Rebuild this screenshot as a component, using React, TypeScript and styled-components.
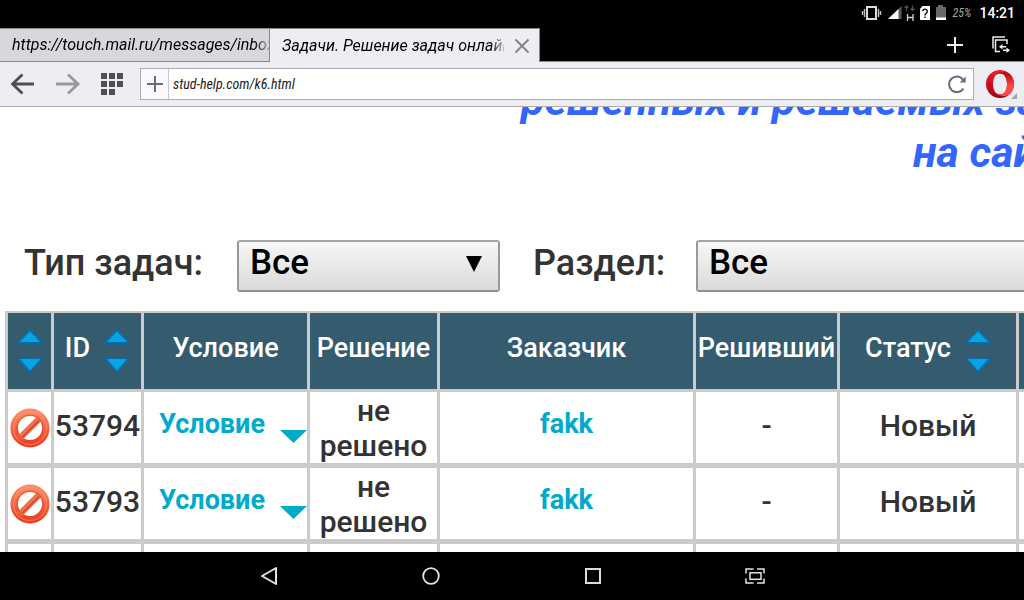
import React from "react";
import styled, { createGlobalStyle } from "styled-components";

const chrome = "#ededf4";
const chromeLine = "#adadb1";
const tabLine = "#87888c";
const gridLine = "#cbcbcb";
const headFill = "#355b6f";
const accent = "#00aaca";

const GlobalStyle = createGlobalStyle`
  *, *::before, *::after { box-sizing: border-box; }
  body { margin: 0; background: #000; font-family: Roboto, "Liberation Sans", sans-serif; }
  button { margin: 0; padding: 0; border: 0; background: none; color: inherit; font: inherit; cursor: pointer; }
  svg { display: block; flex: none; }
`;

const Screen = styled.div`
  display: flex;
  flex-direction: column;
  height: 100vh;
  overflow: hidden;
`;

const StatusBar = styled.header`
  display: flex;
  flex: none;
  justify-content: flex-end;
  align-items: center;
  height: 28px;
  padding: 0 9px 3px 0;
  background: #000;
  color: #fff;
`;

const StatusIcons = styled.div`
  display: flex;
  align-items: center;
`;

const BatteryText = styled.span`
  margin-left: 6px;
  color: #a8a8a8;
  font: italic 400 12px/16px "Roboto Condensed", Roboto, sans-serif;
`;

const Clock = styled.time`
  margin-left: 8px;
  font-size: 14px;
  font-weight: 500;
  line-height: 16px;
`;

const TabStrip = styled.nav`
  display: flex;
  flex: none;
  height: 34px;
  background: #000;
`;

const Tab = styled.div<{ $active?: boolean }>`
  display: flex;
  align-items: center;
  flex: 0 1 270px;
  min-width: 0;
  gap: 10px;
  padding: 0 ${(p) => (p.$active ? 9 : 0)}px 0 12px;
  border: solid ${tabLine};
  border-width: 1px 1px ${(p) => (p.$active ? 0 : 1)}px 0;
  background: ${(p) => (p.$active ? chrome : "#d7d8dd")};
`;

const TabTitle = styled.button`
  flex: 1;
  min-width: 0;
  overflow: hidden;
  color: #000;
  font-size: 16px;
  font-style: italic;
  line-height: 24px;
  text-align: left;
  white-space: nowrap;
  mask-image: linear-gradient(to right, #000 calc(100% - 14px), rgba(0, 0, 0, 0.2));
`;

const StripActions = styled.div`
  display: flex;
  flex: 1;
  justify-content: flex-end;
  align-items: center;
  gap: 29px;
  padding-right: 14px;
  border-bottom: 1px solid ${tabLine};
`;

const Toolbar = styled.div`
  display: flex;
  flex: none;
  align-items: center;
  height: 45px;
  padding: 0 5px 0 11px;
  border-bottom: 1px solid ${chromeLine};
  background: ${chrome};
`;

const NavIcons = styled.div`
  display: flex;
  align-items: center;
  gap: 21px;
  margin-right: 17px;
`;

const AddressBar = styled.form`
  display: flex;
  flex: 1;
  height: 32px;
  margin-right: 12px;
  border: 1px solid ${chromeLine};
  background: #fff;
`;

const AddButton = styled.button`
  display: flex;
  justify-content: center;
  align-items: center;
  width: 28px;
  border-right: 1px solid #c8c8cc;
  background: #f9f9fc;
`;

const AddressInput = styled.input`
  flex: 1;
  min-width: 0;
  padding: 0 4px;
  border: 0;
  outline: 0;
  background: none;
  color: #222;
  font: italic 400 14px/20px "Roboto Condensed", Roboto, sans-serif;
`;

const ReloadButton = styled.button`
  padding: 0 6px;
`;

const Page = styled.main`
  flex: 1;
  min-height: 0;
  overflow: hidden;
  background: #fff;
  color: #333;
`;

const Title = styled.h1`
  display: flex;
  flex-direction: column;
  margin: -33px 0 0;
  color: #3366ff;
  font-size: 43px;
  font-style: italic;
  font-weight: 700;
  line-height: 52px;
  white-space: nowrap;
`;

const TitleLine = styled.span<{ $indent: number }>`
  padding-left: ${(p) => p.$indent}px;
`;

const Filters = styled.form`
  display: flex;
  align-items: center;
  margin-top: 62px;
  padding-left: 24px;
`;

const FilterLabel = styled.label<{ $width: number }>`
  flex: none;
  width: ${(p) => p.$width}px;
  padding-bottom: 6px;
  font-size: 36px;
  font-weight: 500;
  line-height: 44px;
`;

const SelectBox = styled.div<{ $wide?: boolean }>`
  position: relative;
  flex: ${(p) => (p.$wide ? "1 0 400px" : "0 0 263px")};
  margin-right: ${(p) => (p.$wide ? 0 : 33)}px;

  svg {
    position: absolute;
    top: 16px;
    right: 18px;
    color: #000;
    pointer-events: none;
  }
`;

const Select = styled.select`
  display: block;
  width: 100%;
  height: 52px;
  padding: 0 11px 6px;
  border: 2px solid;
  border-color: #a6a6a6 #999 #8e8e8e;
  border-radius: 3px;
  appearance: none;
  background: linear-gradient(#f7f7f7, #dadada);
  color: #000;
  font: 500 35px/42px Roboto, sans-serif;
`;

const Tasks = styled.table`
  width: calc(100% - 5px);
  margin: 19px 0 0 5px;
  border: solid ${gridLine};
  border-width: 2px 0 0 3px;
  border-spacing: 0;
  table-layout: fixed;
`;

const Column = styled.col<{ $width?: number }>`
  width: ${(p) => (p.$width ? `${p.$width}px` : "auto")};
`;

const HeadCell = styled.th`
  height: 79px;
  padding: 0;
  border: solid ${gridLine};
  border-width: 0 3px 3px 0;
  background: ${headFill};
  color: #fff;
  font-size: 27px;
  font-weight: 500;
  line-height: 32px;
  white-space: nowrap;

  &:last-child { border-right-width: 0; }
`;

const HeadContent = styled.div`
  display: flex;
  justify-content: center;
  align-items: center;
  gap: 13px;
`;

const HeadText = styled.span`
  padding-bottom: 6px;
`;

const Cell = styled.td`
  height: 76px;
  padding: 0;
  border: solid ${gridLine};
  border-width: 0 3px 5px 0;
  font-size: 30px;
  font-weight: 500;
  line-height: 35px;
  text-align: center;

  &:last-child { border-right-width: 0; }
`;

const CellText = styled.div`
  padding-bottom: 5px;
  white-space: nowrap;
`;

const CellIcon = styled.div`
  display: flex;
  justify-content: center;
`;

const CellLink = styled.a`
  display: block;
  padding-bottom: 6px;
  color: ${accent};
  font-size: 27px;
  font-weight: 700;
  text-decoration: none;
`;

const Disclosure = styled.button`
  display: flex;
  justify-content: flex-end;
  align-items: flex-end;
  gap: 15px;
  width: 100%;
  padding-bottom: 8px;
  color: ${accent};
  font-size: 27px;
  font-weight: 700;
  line-height: 44px;
`;

const SystemBar = styled.nav`
  display: flex;
  flex: none;
  justify-content: center;
  height: 48px;
  background: #000;
`;

const SystemButton = styled.button`
  display: flex;
  flex: 0 1 162px;
  justify-content: center;
  align-items: center;
`;

const StatusGlyphs = () => (
  <svg width="86" height="20" viewBox="861 2 86 20" aria-hidden="true">
    <rect x="867" y="6" width="9" height="12" fill="none" stroke="#dcdcdc" strokeWidth="2" />
    <path d="M864.500 8v8M878.500 8v8M862.500 10v4M880.500 10v4" stroke="#c4c4c4" strokeWidth="1.400" />
    <path d="M901.500 5V18H888Z" fill="#5c5c5c" />
    <path d="M898.500 8V18H888Z" fill="#fff" />
    <path d="M906.500 10V5M904.500 7l2-2 2 2M912.500 4.500v5M910.500 7.500l2 2 2-2" fill="none" stroke="#4c4c4c" strokeWidth="1.300" />
    <path d="M907.500 13v7M913 13v7M907.500 16.500H913" stroke="#d2d2d2" strokeWidth="1.300" />
    <path d="M922.500 5H930V19H920V8Z" fill="#fff" />
    <path d="M922.700 10.300q.2-2 2.300-2t2.300 2q0 1.200-1.200 2.100T925 14.500M925 15.500v1.600" fill="none" stroke="#111" strokeWidth="1.400" />
    <path d="M938 4h5v2h3v12.500H936V6h2z" fill="#686868" />
    <path d="M936 16.500h10v2.500h-10z" fill="#fff" />
  </svg>
);

const CloseIcon = () => (
  <svg width="16" height="16" viewBox="0 0 16 16" aria-hidden="true">
    <path d="M1.500 1.500l13 13M14.500 1.500l-13 13" stroke="#84858a" strokeWidth="2" />
  </svg>
);

const PlusIcon = ({ color }: { color: string }) => (
  <svg width="16" height="16" viewBox="0 0 16 16" aria-hidden="true">
    <path d="M8 0v16M0 8h16" stroke={color} strokeWidth="2" />
  </svg>
);

const TabsIcon = () => (
  <svg width="18" height="18" viewBox="0 0 18 18" aria-hidden="true">
    <path d="M1 12.500V1h12M8 15.500H3.500V4H15v4" fill="none" stroke="#ededf0" strokeWidth="1.500" />
    <path d="M7 10.800L10.500 8v2H14v1.600h-3.500v2zM18 14.200L14.500 11.400v2H11V15h3.500v2z" fill="#ededf0" />
  </svg>
);

const ArrowIcon = ({ forward }: { forward?: boolean }) => (
  <svg width="24" height="22" viewBox="0 0 24 22" aria-hidden="true">
    <path
      d={forward ? "M0 11h22M12 1.500L22 11l-10 9.500" : "M23 11H2M11.500 1.500L1.500 11l10 9.500"}
      fill="none"
      stroke={forward ? "#98989c" : "#4f4f52"}
      strokeWidth="2.800"
    />
  </svg>
);

const GridIcon = () => (
  <svg width="22" height="22" viewBox="0 0 22 22" fill="#4f4f52" aria-hidden="true">
    <path d="M0 0h6v6H0zM8 0h6v6H8zM16 0h6v6h-6zM0 8h6v6H0zM8 8h6v6H8zM16 8h6v6h-6zM0 16h6v6H0zM8 16h6v6H8z" />
  </svg>
);

const ReloadIcon = () => (
  <svg width="20" height="20" viewBox="0 0 20 20" aria-hidden="true">
    <path d="M16 5.500A7.800 7.800 0 1 0 16.500 14.500" fill="none" stroke="#6c6c70" strokeWidth="2.100" />
    <path d="M18.700 2.500v6h-6z" fill="#6c6c70" />
  </svg>
);

const OperaIcon = () => (
  <svg width="33" height="30" viewBox="0 0 33 30" aria-hidden="true">
    <defs>
      <linearGradient id="operaOuter" x1="0" y1="0" x2="0" y2="1">
        <stop offset="0" stopColor="#f0202e" />
        <stop offset="1" stopColor="#a8000c" />
      </linearGradient>
      <linearGradient id="operaInner" x1="0" y1="0" x2="0" y2="1">
        <stop offset="0" stopColor="#b00812" />
        <stop offset="0.6" stopColor="#ff4a4a" />
      </linearGradient>
    </defs>
    <path d="M14 1a14 14 0 1 0 0 28a14 14 0 0 0 0-28zM14 4.500c4.500 0 7 4.800 7 10.500S18.500 25.500 14 25.500S7 20.700 7 15S9.500 4.500 14 4.500z" fill="url(#operaOuter)" fillRule="evenodd" />
    <path d="M10 6.200C13 2.500 19 2 23.300 4.600A14 14 0 0 1 23.300 25.400C19 28 13 27.500 10 23.800q1.700 1.700 4 1.700c4.500 0 7-4.800 7-10.500S18.500 4.500 14 4.500q-2.300 0-4 1.700z" fill="url(#operaInner)" />
    <path d="M31 24v6h-6z" fill="#a4a4aa" />
  </svg>
);

const SortIcon = () => (
  <svg width="27" height="44" viewBox="0 0 27 44" aria-hidden="true">
    <path d="M14 1.500L26 14H2zM14 42.500L26 29H2z" fill="#08a5e2" stroke="#0674b4" strokeWidth="1.800" strokeLinejoin="round" />
    <path d="M1.500 14.500H26.500M1.500 29H26.500" stroke="#0569a6" strokeWidth="2" />
  </svg>
);

const BlockedIcon = () => (
  <svg width="40" height="40" viewBox="0 0 40 40" role="img" aria-label="Закрыто">
    <defs>
      <linearGradient id="blocked" x1="0" y1="0" x2="0" y2="1">
        <stop offset="0" stopColor="#fb8a67" />
        <stop offset="0.5" stopColor="#f76541" />
        <stop offset="1" stopColor="#ee3d20" />
      </linearGradient>
    </defs>
    <circle cx="20" cy="20" r="15.800" fill="#fff" stroke="url(#blocked)" strokeWidth="7.500" />
    <path d="M10 30l20-20" stroke="#f4704c" strokeWidth="6.500" />
    <circle cx="20" cy="20" r="13" fill="none" stroke="#cf4a2c" strokeWidth="1" opacity="0.7" />
    <circle cx="20" cy="20" r="16.500" fill="none" stroke="#ff9776" strokeWidth="1.500" opacity="0.5" />
    <path d="M12.500 29l16.500-16.500" stroke="#d24022" strokeWidth="1.200" />
  </svg>
);

const DropTriangle = ({ size }: { size: number }) => (
  <svg width={size} height="16" viewBox={`0 0 ${size} 16`} aria-hidden="true">
    <path d={`M0 0h${size}L${size / 2} ${size === 16 ? 16 : 13}z`} fill="currentColor" />
  </svg>
);

const rows = [
  { id: "53794", customer: "fakk", solver: "-", status: "Новый" },
  { id: "53793", customer: "fakk", solver: "-", status: "Новый" },
];

const columnWidths = [46, 90, 166, 130, 256, 144, 179];

const headings = [
  { text: "", sortable: true },
  { text: "ID", sortable: true },
  { text: "Условие" },
  { text: "Решение" },
  { text: "Заказчик" },
  { text: "Решивший" },
  { text: "Статус", sortable: true },
  { text: "" },
];

const TaskRow = ({ id, customer, solver, status }: (typeof rows)[number]) => (
  <tr>
    <Cell><CellIcon><BlockedIcon /></CellIcon></Cell>
    <Cell><CellText>{id}</CellText></Cell>
    <Cell>
      <Disclosure type="button">Условие<DropTriangle size={27} /></Disclosure>
    </Cell>
    <Cell>не решено</Cell>
    <Cell><CellLink href="#customer">{customer}</CellLink></Cell>
    <Cell><CellText>{solver}</CellText></Cell>
    <Cell><CellText>{status}</CellText></Cell>
    <Cell />
  </tr>
);

export default function App() {
  return (
    <Screen>
      <GlobalStyle />
      <StatusBar>
        <StatusIcons>
          <StatusGlyphs />
          <BatteryText>25%</BatteryText>
          <Clock>14:21</Clock>
        </StatusIcons>
      </StatusBar>

      <TabStrip aria-label="Вкладки">
        <Tab><TabTitle type="button">https://touch.mail.ru/messages/inbox</TabTitle></Tab>
        <Tab $active>
          <TabTitle type="button">Задачи. Решение задач онлайн</TabTitle>
          <button type="button" aria-label="Закрыть вкладку"><CloseIcon /></button>
        </Tab>
        <StripActions>
          <button type="button" aria-label="Новая вкладка"><PlusIcon color="#ededf0" /></button>
          <button type="button" aria-label="Все вкладки"><TabsIcon /></button>
        </StripActions>
      </TabStrip>

      <Toolbar>
        <NavIcons>
          <button type="button" aria-label="Назад"><ArrowIcon /></button>
          <button type="button" aria-label="Вперёд"><ArrowIcon forward /></button>
          <button type="button" aria-label="Экспресс-панель"><GridIcon /></button>
        </NavIcons>
        <AddressBar onSubmit={(e) => e.preventDefault()}>
          <AddButton type="button" aria-label="Добавить страницу"><PlusIcon color="#6c6c70" /></AddButton>
          <AddressInput aria-label="Адрес" defaultValue="stud-help.com/k6.html" />
          <ReloadButton type="button" aria-label="Обновить"><ReloadIcon /></ReloadButton>
        </AddressBar>
        <button type="button" aria-label="Меню Opera"><OperaIcon /></button>
      </Toolbar>

      <Page>
        <Title>
          <TitleLine $indent={521}>решенных и решаемых задач</TitleLine>
          <TitleLine $indent={913}>на сайте</TitleLine>
        </Title>

        <Filters>
          <FilterLabel htmlFor="kind" $width={213}>Тип задач:</FilterLabel>
          <SelectBox>
            <Select id="kind"><option>Все</option></Select>
            <DropTriangle size={16} />
          </SelectBox>
          <FilterLabel htmlFor="section" $width={163}>Раздел:</FilterLabel>
          <SelectBox $wide>
            <Select id="section"><option>Все</option></Select>
            <DropTriangle size={16} />
          </SelectBox>
        </Filters>

        <Tasks>
          <colgroup>
            {columnWidths.map((w, i) => <Column key={i} $width={w} />)}
            <Column />
          </colgroup>
          <thead>
            <tr>
              {headings.map((h, i) => (
                <HeadCell key={i} scope="col">
                  <HeadContent>
                    {h.text && <HeadText>{h.text}</HeadText>}
                    {h.sortable && <SortIcon />}
                  </HeadContent>
                </HeadCell>
              ))}
            </tr>
          </thead>
          <tbody>
            {rows.map((r) => <TaskRow key={r.id} {...r} />)}
            <tr>{headings.map((_, i) => <Cell key={i} />)}</tr>
          </tbody>
        </Tasks>
      </Page>

      <SystemBar aria-label="Системная навигация">
        <SystemButton type="button" aria-label="Назад">
          <svg width="18" height="20" viewBox="0 0 18 20"><path d="M16 2v16L2 10z" fill="none" stroke="#e4e4e4" strokeWidth="2" strokeLinejoin="round" /></svg>
        </SystemButton>
        <SystemButton type="button" aria-label="Домой">
          <svg width="18" height="18" viewBox="0 0 18 18"><circle cx="9" cy="9" r="7.800" fill="none" stroke="#e4e4e4" strokeWidth="1.800" /></svg>
        </SystemButton>
        <SystemButton type="button" aria-label="Обзор">
          <svg width="16" height="16" viewBox="0 0 16 16"><rect x="1" y="1" width="14" height="14" fill="none" stroke="#dcdcdc" strokeWidth="2" /></svg>
        </SystemButton>
        <SystemButton type="button" aria-label="Снимок экрана">
          <svg width="20" height="16" viewBox="0 0 20 16" fill="none" stroke="#e4e4e4" strokeWidth="1.500">
            <path d="M1 5.500V1h7.500M12 1h7v4.500M19 10.500V15h-7M8.500 15H1v-4.500" />
            <rect x="5" y="4.800" width="11" height="6.500" />
          </svg>
        </SystemButton>
      </SystemBar>
    </Screen>
  );
}
